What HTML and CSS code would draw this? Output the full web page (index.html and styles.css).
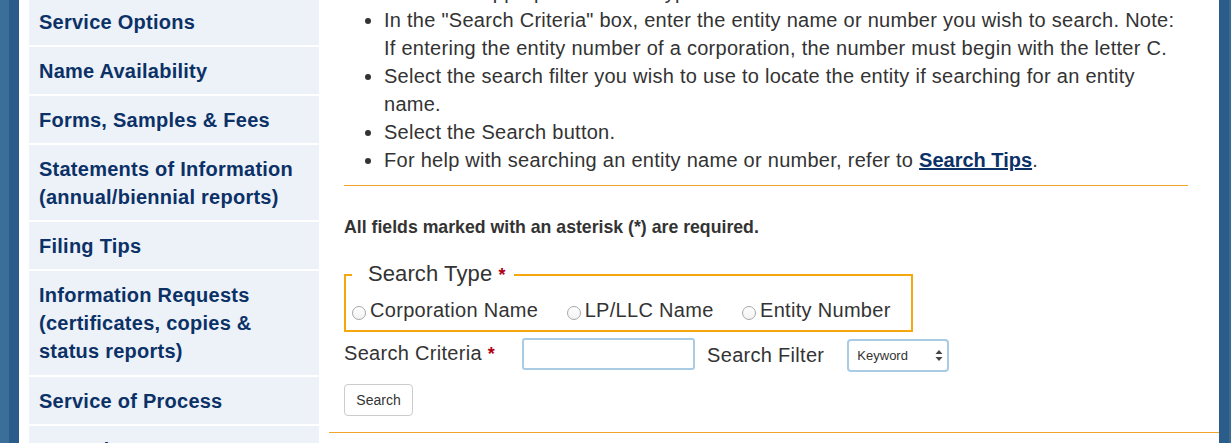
FILE: index.html
```html
<!DOCTYPE html>
<html lang="en">
<head>
<meta charset="utf-8">
<title>Business Search</title>
<link rel="stylesheet" href="styles.css">
</head>
<body>
<div class="page">
  <div class="edge-left"></div>
  <nav class="sidebar">
    <ul class="side-nav">
      <li><a href="#">Service Options</a></li>
      <li><a href="#">Name Availability</a></li>
      <li><a href="#">Forms, Samples &amp; Fees</a></li>
      <li><a href="#">Statements of Information (annual/biennial reports)</a></li>
      <li><a href="#">Filing Tips</a></li>
      <li><a href="#">Information Requests (certificates, copies &amp; status reports)</a></li>
      <li><a href="#">Service of Process</a></li>
      <li><a href="#">Records</a></li>
    </ul>
  </nav>
  <main class="main">
    <section class="panel">
      <ul class="steps">
        <li>Select the appropriate search type.</li>
        <li>In the "Search Criteria" box, enter the entity name or number you wish to search. Note: If entering the entity number of a corporation, the number must begin with the letter C.</li>
        <li>Select the search filter you wish to use to locate the entity if searching for an entity name.</li>
        <li>Select the Search button.</li>
        <li>For help with searching an entity name or number, refer to <a href="#" class="tips">Search Tips</a>.</li>
      </ul>
      <hr class="rule">
      <p class="required-note">All fields marked with an asterisk (*) are required.</p>
      <form class="search-form">
        <fieldset class="search-type">
          <legend>Search Type <span class="req">*</span></legend>
          <label class="radio-label"><input type="radio" name="type" class="radio">Corporation Name</label>
          <label class="radio-label"><input type="radio" name="type" class="radio">LP/LLC Name</label>
          <label class="radio-label"><input type="radio" name="type" class="radio">Entity Number</label>
        </fieldset>
        <div class="criteria-row">
          <label class="field-label" for="criteria">Search Criteria <span class="req">*</span></label>
          <input id="criteria" type="text" class="text-input">
          <label class="field-label filter-label" for="filter">Search Filter</label>
          <span class="select-wrap">
            <select id="filter" class="select">
              <option>Keyword</option>
              <option>Exact</option>
            </select>
            <svg class="select-arrows" width="8" height="13" viewBox="0 0 8 13" aria-hidden="true">
              <path d="M4 1 L7.5 5 L0.5 5 Z" fill="#444"/>
              <path d="M4 12 L7.5 8 L0.5 8 Z" fill="#444"/>
            </svg>
          </span>
        </div>
        <div class="button-row">
          <button type="button" class="search-btn">Search</button>
        </div>
      </form>
    </section>
  </main>
  <div class="edge-right"></div>
</div>
</body>
</html>
```
FILE: styles.css
```css
* { box-sizing: border-box; }

html, body {
  margin: 0;
  padding: 0;
  background: #ffffff;
  font-family: "Liberation Sans", Arial, Helvetica, sans-serif;
  color: #333333;
}

.page {
  display: flex;
  height: 443px;
  overflow: hidden;
}

.edge-left {
  flex: 0 0 19px;
  background: linear-gradient(to right, #3c6e9a 0, #3c6e9a 9px, #2b5b88 9px, #2b5b88 100%);
}

.sidebar {
  flex: 0 0 290px;
  margin-left: 10px;
  background: #edf1f8;
}

.side-nav {
  list-style: none;
  margin: -2px 0 0 0;
  padding: 0;
}

.side-nav li {
  border-bottom: 2px solid #ffffff;
}

.side-nav a {
  display: block;
  padding: 10px 10px 9px 10px;
  font-size: 20px;
  line-height: 28px;
  font-weight: bold;
  letter-spacing: 0.25px;
  color: #0b3167;
  text-decoration: none;
}

.side-nav li:nth-child(6) a {
  padding-right: 40px;
  padding-bottom: 10px;
}

.main {
  flex: 1 1 auto;
  margin-left: 10px;
  min-width: 0;
}

.panel {
  margin-top: -22px;
  padding: 0 31px 16px 15px;
  border-bottom: 1px solid #f0a52a;
}

.steps {
  margin: 0;
  padding-left: 40px;
  font-size: 20px;
  line-height: 28px;
  letter-spacing: 0.27px;
  color: #333333;
}

.tips {
  color: #0b3167;
  font-weight: bold;
  letter-spacing: 0;
  text-decoration: underline;
}

.rule {
  margin: 11px 0 0 0;
  border: 0;
  border-top: 1px solid #f0a52a;
  height: 0;
}

.required-note {
  margin: 28px 0 0 0;
  font-size: 17.7px;
  line-height: 26px;
  font-weight: bold;
  color: #333333;
}

.search-form {
  margin: 0;
}

.search-type {
  display: inline-block;
  margin: 21px 0 0 0;
  padding: 10px 20px 6px 6px;
  border: 2px solid #f5a70d;
}

.search-type legend {
  padding: 0 8px 0 16px;
  margin-left: 0;
  font-size: 22px;
  line-height: 26px;
  letter-spacing: 0.1px;
  color: #333333;
}

.req {
  color: #b00012;
  font-weight: bold;
  font-size: 18px;
}

.radio-label {
  display: inline-flex;
  align-items: center;
  font-size: 20px;
  line-height: 24px;
  letter-spacing: 0.3px;
  color: #333333;
  margin-right: 24px;
}

.radio-label:last-child {
  margin-right: 0;
}

.radio {
  appearance: none;
  -webkit-appearance: none;
  width: 14px;
  height: 14px;
  margin: 6px 4px 0 0;
  border: 1px solid #a8a8a8;
  border-radius: 50%;
  background: linear-gradient(#ffffff, #f2f2f2);
}

.criteria-row {
  display: flex;
  align-items: flex-start;
  margin-top: 6px;
}

.field-label {
  margin-top: 1px;
  font-size: 20px;
  line-height: 28px;
  letter-spacing: 0.3px;
  color: #333333;
}

.text-input {
  width: 173px;
  height: 32px;
  margin-left: 27px;
  border: 2px solid #a9cbe4;
  border-radius: 3px;
  background: #ffffff;
  font-family: inherit;
  font-size: 14px;
}

.filter-label {
  margin-left: 12px;
  margin-top: 3px;
}

.select-wrap {
  position: relative;
  display: inline-block;
  margin-left: 23px;
  margin-top: 1px;
}

.select {
  appearance: none;
  -webkit-appearance: none;
  display: block;
  width: 102px;
  height: 33px;
  padding: 0 20px 0 8px;
  border: 2px solid #a9cbe4;
  border-radius: 4px;
  background: #ffffff;
  font-family: inherit;
  font-size: 13px;
  color: #333333;
}

.select-arrows {
  position: absolute;
  right: 6px;
  top: 10px;
  pointer-events: none;
}

.button-row {
  margin-top: 12px;
}

.search-btn {
  display: block;
  width: 69px;
  height: 32px;
  padding: 0;
  border: 1px solid #cccccc;
  border-radius: 4px;
  background: #ffffff;
  font-family: inherit;
  font-size: 14px;
  color: #333333;
}

.edge-right {
  flex: 0 0 12px;
  background: linear-gradient(to right, #2b5d8a 0, #2b5d8a 10px, #3a6a95 10px);
}
```
